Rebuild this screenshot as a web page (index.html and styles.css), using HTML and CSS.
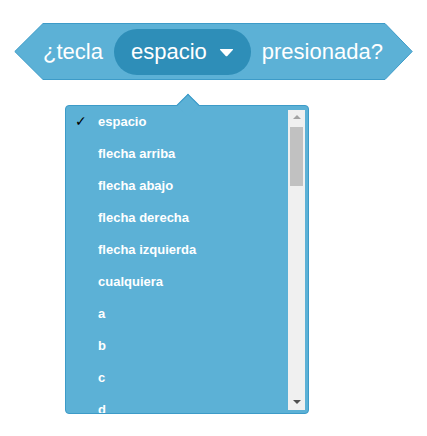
FILE: index.html
```html
<!DOCTYPE html>
<html lang="es">
<head>
<meta charset="utf-8">
<link rel="stylesheet" href="styles.css">
</head>
<body>
<div class="block">
  <svg class="block-shape" width="399" height="57" viewBox="0 0 399 57">
    <polygon points="0.8,28.5 29,0.5 371,0.5 398.2,28.5 371,56.5 29,56.5" fill="#5cb1d6" stroke="#3d9bc8" stroke-width="1"/>
  </svg>
  <span class="label">¿tecla</span>
  <span class="pill">
    <span class="pill-text">espacio</span>
    <svg class="caret" width="15" height="9" viewBox="0 0 15 9"><path d="M1.5 1 H13.5 Q14.6 1 13.8 1.9 L8.3 7.9 Q7.5 8.7 6.7 7.9 L1.2 1.9 Q0.4 1 1.5 1 Z" fill="#ffffff"/></svg>
  </span>
  <span class="label">presionada?</span>
</div>
<div class="dropdown">
  <div class="pointer"></div>
  <div class="menu">
    <ul class="list">
      <li class="item"><span class="check">✓</span><span>espacio</span></li>
      <li class="item"><span class="check"></span><span>flecha arriba</span></li>
      <li class="item"><span class="check"></span><span>flecha abajo</span></li>
      <li class="item"><span class="check"></span><span>flecha derecha</span></li>
      <li class="item"><span class="check"></span><span>flecha izquierda</span></li>
      <li class="item"><span class="check"></span><span>cualquiera</span></li>
      <li class="item"><span class="check"></span><span>a</span></li>
      <li class="item"><span class="check"></span><span>b</span></li>
      <li class="item"><span class="check"></span><span>c</span></li>
      <li class="item"><span class="check"></span><span>d</span></li>
    </ul>
    <div class="scrollbar">
      <div class="arrow arrow-up"></div>
      <div class="track"><div class="thumb"></div></div>
      <div class="arrow arrow-down"></div>
    </div>
  </div>
</div>
</body>
</html>
```
FILE: styles.css
```css
html, body {
  margin: 0;
  padding: 0;
  background: #ffffff;
  font-family: "Liberation Sans", Arial, Helvetica, sans-serif;
}

.block {
  position: relative;
  box-sizing: border-box;
  width: 399px;
  height: 57px;
  margin: 23px 0 0 14px;
  padding: 0 28px 0 29px;
  display: flex;
  align-items: center;
  gap: 11px;
  color: #ffffff;
  font-size: 22px;
}

.block-shape {
  position: absolute;
  left: 0;
  top: 0;
}

.label {
  position: relative;
  line-height: 1;
}

.pill {
  position: relative;
  box-sizing: border-box;
  height: 46px;
  padding: 0 17px;
  border-radius: 23px;
  background: #2e8eb8;
  display: flex;
  align-items: center;
  gap: 12px;
}

.pill-text {
  line-height: 1;
}

.caret {
  display: block;
  margin-top: 1px;
}

.dropdown {
  position: relative;
  width: 244px;
  margin: 25px 0 0 65px;
}

.pointer {
  position: absolute;
  left: 115px;
  top: -8px;
  width: 15px;
  height: 15px;
  background: #5cb1d6;
  border-left: 1px solid #3d9bc8;
  border-top: 1px solid #3d9bc8;
  transform: rotate(45deg);
  z-index: 1;
}

.menu {
  position: relative;
  box-sizing: border-box;
  height: 309px;
  background: #5cb1d6;
  border: 1px solid #3d9bc8;
  border-radius: 4px;
  display: flex;
  overflow: hidden;
}

.list {
  flex: 1;
  margin: 0;
  padding: 0;
  list-style: none;
  overflow: hidden;
  position: relative;
  z-index: 2;
}

.item {
  display: flex;
  align-items: center;
  height: 32px;
  padding-left: 9px;
  color: #ffffff;
  font-size: 13px;
  font-weight: bold;
}

.item:first-child {
  margin-top: -1px;
}

.check {
  width: 23px;
  color: #000000;
  font-family: "DejaVu Sans", sans-serif;
  font-weight: normal;
  font-size: 14px;
}

.scrollbar {
  width: 17px;
  margin: 4px 3px 3px 0;
  background: #f0f0f0;
  display: flex;
  flex-direction: column;
  align-items: center;
  position: relative;
  z-index: 2;
}

.arrow {
  width: 0;
  height: 0;
  border-left: 4px solid transparent;
  border-right: 4px solid transparent;
}

.arrow-up {
  margin-top: 5px;
  border-bottom: 4px solid #a3a3a3;
}

.arrow-down {
  margin-bottom: 6px;
  border-top: 4px solid #505050;
}

.track {
  flex: 1;
  width: 13px;
  padding-top: 8px;
}

.thumb {
  height: 59px;
  background: #c1c1c1;
}
```
